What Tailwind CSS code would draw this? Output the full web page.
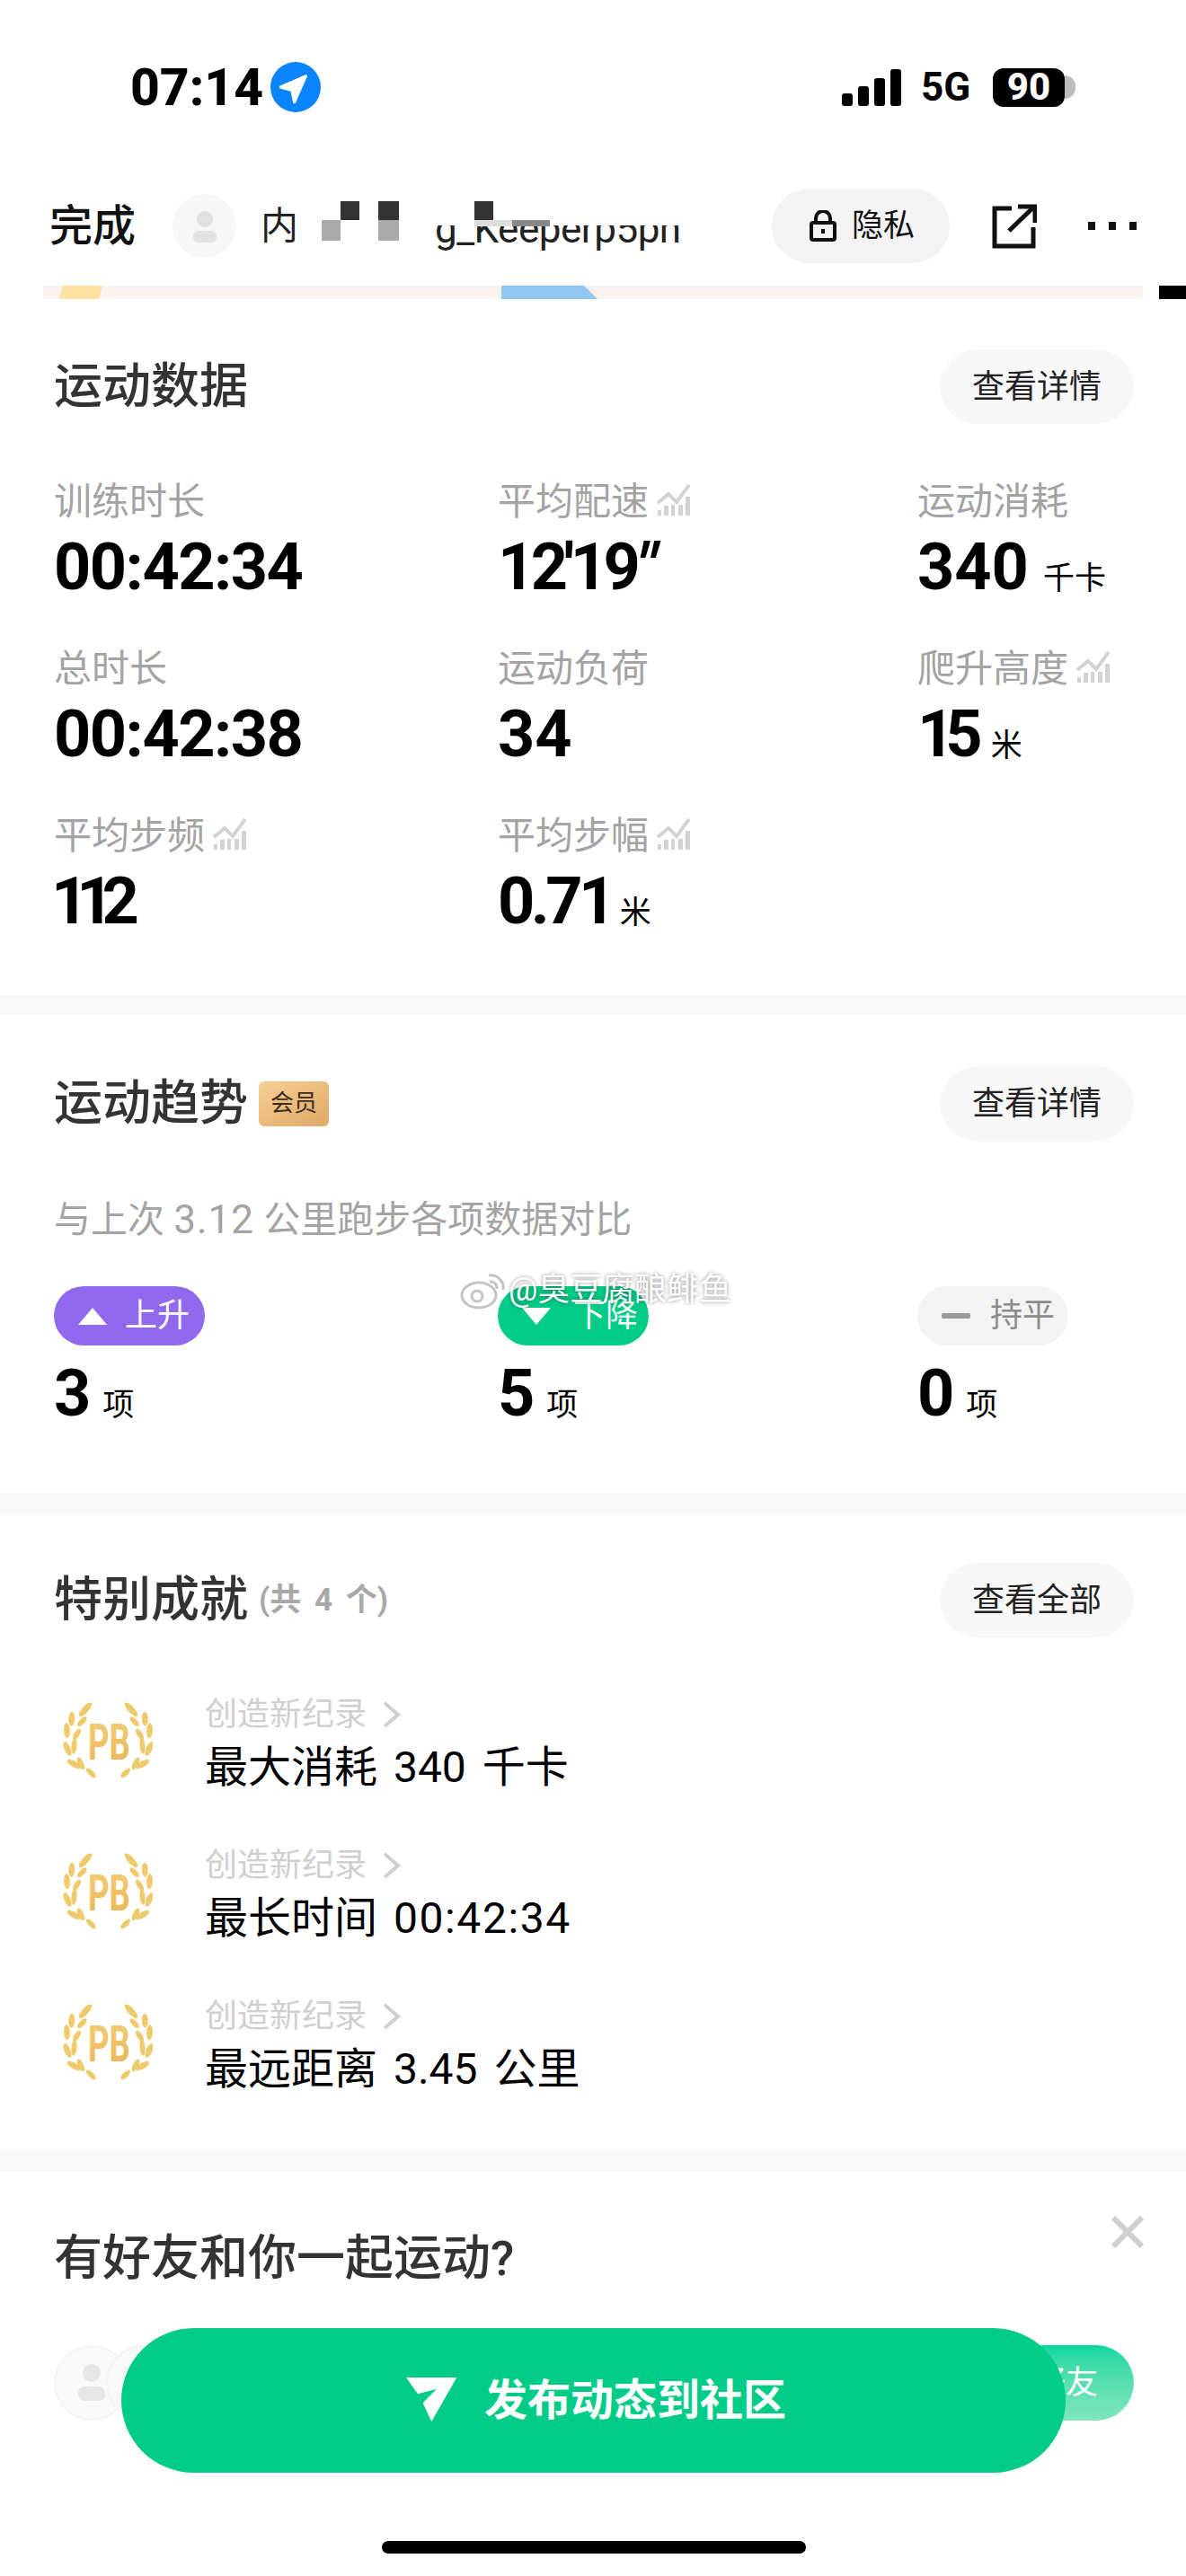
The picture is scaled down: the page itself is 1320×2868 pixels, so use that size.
<!DOCTYPE html>
<html lang="zh-CN">
<head>
  <meta charset="UTF-8">
  <meta name="viewport" content="width=device-width, initial-scale=1.0">
  <title>运动数据</title>
  <script src="https://cdn.jsdelivr.net/npm/@tailwindcss/browser@4"></script>
</head>
<body class="bg-white font-['Roboto','Noto_Sans_CJK_SC',sans-serif]">
  <svg class="absolute w-0 h-0">
    <symbol id="trend" viewBox="0 0 38 36">
      <path d="M1 22 L13 12 L22 21 L36 2" fill="none" stroke="#d2d2d2" stroke-width="4"/>
      <rect x="1" y="30" width="4" height="6" fill="#d2d2d2"/>
      <rect x="8" y="25" width="5" height="11" fill="#d2d2d2"/>
      <rect x="16" y="24" width="4" height="12" fill="#d2d2d2"/>
      <rect x="24" y="24" width="5" height="12" fill="#d2d2d2"/>
      <rect x="32" y="15" width="5" height="21" fill="#d2d2d2"/>
    </symbol>
    <linearGradient id="gold" x1="0" y1="0" x2="0" y2="1">
      <stop offset="0" stop-color="#f3cf78"/>
      <stop offset="1" stop-color="#e8b450"/>
    </linearGradient>
    <g id="leaves" fill="#efca6c">
      <ellipse cx="25" cy="9.3" rx="3.6" ry="10" transform="rotate(42 25 9.3)"/>
      <ellipse cx="9.7" cy="19.8" rx="3.4" ry="8" transform="rotate(3 9.7 19.8)"/>
      <ellipse cx="21.3" cy="22.7" rx="3" ry="7" transform="rotate(43 21.3 22.7)"/>
      <ellipse cx="4.5" cy="32.7" rx="3.4" ry="8.5" transform="rotate(-3 4.5 32.7)"/>
      <ellipse cx="15.5" cy="36.8" rx="3" ry="7" transform="rotate(33 15.5 36.8)"/>
      <ellipse cx="5" cy="53" rx="3.4" ry="8.5" transform="rotate(-23 5 53)"/>
      <ellipse cx="12.5" cy="49.8" rx="3" ry="9" transform="rotate(5 12.5 49.8)"/>
      <ellipse cx="12.5" cy="70" rx="3.4" ry="8.6" transform="rotate(-61 12.5 70)"/>
      <ellipse cx="20" cy="69.3" rx="3" ry="7.5" transform="rotate(-26 20 69.3)"/>
      <ellipse cx="31.3" cy="80" rx="3" ry="7" transform="rotate(-44 31.3 80)"/>
    </g>
    <symbol id="pb" viewBox="0 0 100 92">
      <use href="#leaves"/>
      <use href="#leaves" transform="matrix(-1 0 0 1 101 0)"/>
      <text x="51.5" y="65" text-anchor="middle" font-family="Roboto" font-weight="700" font-size="55" textLength="47" lengthAdjust="spacingAndGlyphs" fill="url(#gold)">PB</text>
    </symbol>
  </svg>

  <div class="relative w-[1320px] h-[2868px] overflow-hidden bg-white">
    <!-- status bar -->
    <div class="h-[44px] mt-[75px] pl-[145px] pr-[123px] flex justify-between items-center">
      <div class="flex items-center">
        <span class="w-[148px] text-[57px] leading-none font-extrabold text-black">07:14</span>
        <span class="ml-[8px] w-[56px] h-[56px] rounded-full bg-[#0a84ff]">
          <svg width="56" height="56" viewBox="0 0 56 56"><path d="M39.5 15.7 L11.2 28 L23.8 31.6 L26.6 44.8 Z" fill="#fff" stroke="#fff" stroke-width="3" stroke-linejoin="round"/></svg>
        </span>
      </div>
      <div class="flex items-center">
        <div class="flex items-end gap-[6px] h-[41px]">
          <span class="w-[12px] h-[14px] rounded-[3px] bg-black"></span>
          <span class="w-[12px] h-[22px] rounded-[3px] bg-black"></span>
          <span class="w-[12px] h-[31px] rounded-[3px] bg-black"></span>
          <span class="w-[12px] h-[41px] rounded-[3px] bg-black"></span>
        </div>
        <span class="ml-[22px] w-[60px] text-[44px] leading-none font-bold text-black">5G</span>
        <span class="ml-[20px] w-[80px] h-[43px] rounded-[12px] bg-black text-white text-[42px] leading-none font-extrabold flex items-center justify-center">90</span>
        <span class="w-[12px] h-[26px] rounded-r-full bg-[#bdbdbd]"></span>
      </div>
    </div>

    <!-- nav -->
    <div class="mt-[91px] h-[83px] pl-[55px] flex items-center">
      <span class="w-[96px] text-[48px] leading-none font-medium text-[#111] whitespace-nowrap">完成</span>
      <span class="ml-[41px] w-[71px] h-[71px] rounded-full bg-[#f7f7f7] flex items-center justify-center">
        <svg width="30" height="36" viewBox="0 0 30 36"><circle cx="15" cy="10" r="9" fill="#e2e2e2"/><rect x="2" y="23" width="26" height="13" rx="6" fill="#e2e2e2"/></svg>
      </span>
      <div class="relative ml-[27px] w-[532px] h-[60px] flex items-center text-[42px] leading-none text-[#222]">
        <span>内</span>
        <span class="absolute left-[194px] top-[11px] text-[44px] tracking-[-0.5px] whitespace-nowrap">g_Keeperp5pn</span>
        <span class="absolute left-[40px] top-0 w-[460px] h-[29px] bg-white"></span>
        <span class="absolute left-[68px] top-[23px] w-[21px] h-[23px] bg-[#aaaaaa]"></span>
        <span class="absolute left-[89px] top-[2px] w-[21px] h-[21px] bg-[#333333]"></span>
        <span class="absolute left-[131px] top-[2px] w-[23px] h-[21px] bg-[#333333]"></span>
        <span class="absolute left-[131px] top-[23px] w-[23px] h-[23px] bg-[#aaaaaa]"></span>
        <span class="absolute left-[238px] top-[2px] w-[21px] h-[21px] bg-[#333333]"></span>
        <span class="absolute left-[238px] top-[23px] w-[42px] h-[7px] bg-[#dddddd]"></span>
        <span class="absolute left-[280px] top-[23px] w-[42px] h-[7px] bg-[#888888]"></span>
      </div>
      <div class="ml-[37px] w-[198px] h-[83px] rounded-full bg-[#f3f3f3] flex items-center pl-[42px]">
        <svg width="30" height="35" viewBox="0 0 30 35" fill="none" stroke="#111" stroke-width="4"><rect x="2" y="14" width="26" height="19" rx="2"/><path d="M7 14 V9 a8 8 0 0 1 16 0 V14"/><rect x="13" y="21" width="4" height="5" fill="#111" stroke="none"/></svg>
        <span class="ml-[17px] text-[35px] leading-none text-[#111]">隐私</span>
      </div>
      <svg class="ml-[47px]" width="50" height="50" viewBox="0 0 50 50" fill="none" stroke="#111" stroke-width="5"><path d="M22 5 H3 V47 H46 V26"/><path d="M19 30 L46 4"/><path d="M29 3 H48 V21"/></svg>
      <div class="ml-[57px] flex gap-[15px]">
        <span class="w-[8px] h-[9px] bg-[#111]"></span>
        <span class="w-[8px] h-[9px] bg-[#111]"></span>
        <span class="w-[8px] h-[9px] bg-[#111]"></span>
      </div>
    </div>

    <!-- map edge -->
    <div class="relative mt-[25px] h-[15px]">
      <div class="absolute left-[48px] top-0 w-[1224px] h-[15px] bg-[#f8f3ef]"></div>
      <div class="absolute left-[68px] top-0 w-[44px] h-[15px] bg-[#fde3a0] -skew-x-12"></div>
      <div class="absolute left-[558px] top-0 w-[107px] h-[15px] bg-[#93c7f3] [clip-path:polygon(0_0,86%_0,100%_100%,0_100%)]"></div>
      <div class="absolute left-[1290px] top-0 w-[30px] h-[15px] bg-black"></div>
    </div>

    <!-- 运动数据 -->
    <section class="pt-[56px] pb-[68px] pl-[60px] pr-[58px]">
      <div class="h-[83px] flex justify-between items-center">
        <h2 class="text-[54px] leading-none font-medium text-[#333]">运动数据</h2>
        <span class="w-[216px] h-[83px] rounded-full bg-[#f7f7f7] flex items-center justify-center text-[36px] text-[#222]">查看详情</span>
      </div>
      <div class="mt-[65px] grid grid-cols-[494px_467px_1fr] gap-y-[55px]">
        <div>
          <div class="h-[44px] flex items-center text-[42px] leading-none text-[#a3a3a3]">训练时长</div>
          <div class="mt-[15px] h-[72px] flex items-baseline text-[72px] leading-[72px] font-bold text-black tracking-[-1.5px]">00:42:34</div>
        </div>
        <div>
          <div class="h-[44px] flex items-center text-[42px] leading-none text-[#a3a3a3]">平均配速<svg class="ml-[9px] -mt-[6px]" width="38" height="36"><use href="#trend"/></svg></div>
          <div class="mt-[15px] h-[72px] flex items-baseline text-[72px] leading-[72px] font-bold text-black tracking-[-4.5px]">12'19<span class="inline-block -skew-x-12">"</span></div>
        </div>
        <div>
          <div class="h-[44px] flex items-center text-[42px] leading-none text-[#a3a3a3]">运动消耗</div>
          <div class="mt-[15px] h-[72px] flex items-baseline text-[72px] leading-[72px] font-bold text-black">340<span class="ml-[16px] text-[35px] font-normal">千卡</span></div>
        </div>
        <div>
          <div class="h-[44px] flex items-center text-[42px] leading-none text-[#a3a3a3]">总时长</div>
          <div class="mt-[15px] h-[72px] flex items-baseline text-[72px] leading-[72px] font-bold text-black tracking-[-1.5px]">00:42:38</div>
        </div>
        <div>
          <div class="h-[44px] flex items-center text-[42px] leading-none text-[#a3a3a3]">运动负荷</div>
          <div class="mt-[15px] h-[72px] flex items-baseline text-[72px] leading-[72px] font-bold text-black">34</div>
        </div>
        <div>
          <div class="h-[44px] flex items-center text-[42px] leading-none text-[#a3a3a3]">爬升高度<svg class="ml-[9px] -mt-[6px]" width="38" height="36"><use href="#trend"/></svg></div>
          <div class="mt-[15px] h-[72px] flex items-baseline text-[72px] leading-[72px] font-bold text-black tracking-[-10px]">15<span class="ml-[19px] text-[35px] font-normal tracking-normal">米</span></div>
        </div>
        <div>
          <div class="h-[44px] flex items-center text-[42px] leading-none text-[#a3a3a3]">平均步频<svg class="ml-[9px] -mt-[6px]" width="38" height="36"><use href="#trend"/></svg></div>
          <div class="mt-[15px] -ml-[3px] h-[72px] flex items-baseline text-[72px] leading-[72px] font-bold text-black tracking-[-13px]">112</div>
        </div>
        <div>
          <div class="h-[44px] flex items-center text-[42px] leading-none text-[#a3a3a3]">平均步幅<svg class="ml-[9px] -mt-[6px]" width="38" height="36"><use href="#trend"/></svg></div>
          <div class="mt-[15px] h-[72px] flex items-baseline text-[72px] leading-[72px] font-bold text-black tracking-[-4.5px]">0.71<span class="ml-[9px] text-[35px] font-normal tracking-normal">米</span></div>
        </div>
      </div>
    </section>

    <div class="h-[22px] bg-[#f8f8f8]"></div>

    <!-- 运动趋势 -->
    <section class="pt-[57px] pb-[74px] pl-[60px] pr-[58px]">
      <div class="h-[83px] flex items-center">
        <h2 class="text-[54px] leading-none font-medium text-[#333]">运动趋势</h2>
        <span class="ml-[12px] w-[78px] h-[50px] rounded-[6px] bg-gradient-to-br from-[#f6cf93] to-[#dfa866] flex items-center justify-center text-[26px] text-[#3b2e1e]">会员</span>
        <span class="ml-auto w-[216px] h-[83px] rounded-full bg-[#f7f7f7] flex items-center justify-center text-[36px] text-[#222]">查看详情</span>
      </div>
      <p class="mt-[66px] h-[44px] flex items-center text-[41px] leading-none text-[#a3a3a3] whitespace-pre">与上次 <span class="text-[44px] tracking-[1px]">3.12</span> 公里跑步各项数据对比</p>
      <div class="mt-[52px] grid grid-cols-[494px_467px_1fr]">
        <div>
          <span class="w-[168px] h-[66px] rounded-full bg-[#9168ee] flex items-center pl-[27px] text-[36px] leading-none text-white">
            <svg width="32" height="19" viewBox="0 0 32 19"><path d="M16 0 L32 19 H0 Z" fill="#fff"/></svg>
            <span class="ml-[20px]">上升</span>
          </span>
        </div>
        <div>
          <span class="w-[168px] h-[66px] rounded-full bg-[#00cc88] flex items-center pl-[27px] text-[36px] leading-none text-white">
            <svg width="32" height="19" viewBox="0 0 32 19"><path d="M16 19 L32 0 H0 Z" fill="#fff"/></svg>
            <span class="ml-[25px]">下降</span>
          </span>
        </div>
        <div>
          <span class="w-[168px] h-[66px] rounded-full bg-[#f3f3f3] flex items-center pl-[27px] text-[36px] leading-none text-[#8c8c8c]">
            <span class="w-[32px] h-[6px] rounded-[2px] bg-[#9a9a9a]"></span>
            <span class="ml-[22px]">持平</span>
          </span>
        </div>
      </div>
      <div class="mt-[18px] grid grid-cols-[494px_467px_1fr]">
        <div class="h-[72px] flex items-baseline text-[72px] leading-[72px] font-bold text-black">3<span class="ml-[13px] text-[35px] font-normal">项</span></div>
        <div class="h-[72px] flex items-baseline text-[72px] leading-[72px] font-bold text-black">5<span class="ml-[13px] text-[35px] font-normal">项</span></div>
        <div class="h-[72px] flex items-baseline text-[72px] leading-[72px] font-bold text-black">0<span class="ml-[13px] text-[35px] font-normal">项</span></div>
      </div>
    </section>

    <div class="h-[24px] bg-[#f8f8f8]"></div>

    <!-- 特别成就 -->
    <section class="pt-[54px] pb-[66px] pl-[62px] pr-[58px]">
      <div class="h-[83px] flex items-center">
        <h2 class="-ml-[2px] text-[54px] leading-none font-medium text-[#333]">特别成就</h2>
        <span class="ml-[12px] text-[35px] leading-none font-bold text-[#a8a8a8] [word-spacing:6px]">(共 4 个)</span>
        <span class="ml-auto w-[216px] h-[83px] rounded-full bg-[#f7f7f7] flex items-center justify-center text-[36px] text-[#222]">查看全部</span>
      </div>
      <div class="mt-[64px] flex flex-col gap-[62px]">
        <div class="flex items-center">
          <svg class="ml-[8px]" width="100" height="92"><use href="#pb"/></svg>
          <div class="ml-[58px]">
            <div class="h-[44px] flex items-center text-[36px] leading-none text-[#cfcfcf]">创造新纪录<svg class="ml-[17px]" width="22" height="30" viewBox="0 0 22 30" fill="none" stroke="#cfcfcf" stroke-width="4"><path d="M3 2 L18 15 L3 28"/></svg></div>
            <div class="mt-[12px] h-[50px] flex items-center text-[48px] leading-none text-black whitespace-pre [word-spacing:6px]">最大消耗 340 千卡</div>
          </div>
        </div>
        <div class="flex items-center">
          <svg class="ml-[8px]" width="100" height="92"><use href="#pb"/></svg>
          <div class="ml-[58px]">
            <div class="h-[44px] flex items-center text-[36px] leading-none text-[#cfcfcf]">创造新纪录<svg class="ml-[17px]" width="22" height="30" viewBox="0 0 22 30" fill="none" stroke="#cfcfcf" stroke-width="4"><path d="M3 2 L18 15 L3 28"/></svg></div>
            <div class="mt-[12px] h-[50px] flex items-center text-[48px] leading-none text-black whitespace-pre [word-spacing:6px]">最长时间 <span class="tracking-[1.6px]">00:42:34</span></div>
          </div>
        </div>
        <div class="flex items-center">
          <svg class="ml-[8px]" width="100" height="92"><use href="#pb"/></svg>
          <div class="ml-[58px]">
            <div class="h-[44px] flex items-center text-[36px] leading-none text-[#cfcfcf]">创造新纪录<svg class="ml-[17px]" width="22" height="30" viewBox="0 0 22 30" fill="none" stroke="#cfcfcf" stroke-width="4"><path d="M3 2 L18 15 L3 28"/></svg></div>
            <div class="mt-[12px] h-[50px] flex items-center text-[48px] leading-none text-black whitespace-pre [word-spacing:6px]">最远距离 3.45 公里</div>
          </div>
        </div>
      </div>
    </section>

    <div class="h-[23px] bg-[#f8f8f8]"></div>

    <!-- 好友 -->
    <section class="relative pt-[67px] pl-[60px] pr-[58px]">
      <h2 class="h-[60px] flex items-center text-[54px] leading-none font-medium text-[#333] whitespace-nowrap">有好友和你一起运动?</h2>
      <div class="mt-[66px] flex items-center">
        <span class="w-[84px] h-[84px] rounded-full bg-[#f9f9f9] border-2 border-[#f3f3f3] flex items-center justify-center">
          <svg width="32" height="42" viewBox="0 0 32 42"><circle cx="16" cy="10" r="10" fill="#e6e6e6"/><rect x="1" y="25" width="30" height="16" rx="7" fill="#e6e6e6"/></svg>
        </span>
        <span class="-ml-[26px] w-[84px] h-[84px] rounded-full bg-[#f9f9f9] border-2 border-[#f3f3f3]"></span>
        <span class="ml-auto w-[240px] h-[84px] rounded-r-[42px] bg-gradient-to-b from-[#00d7a0] to-[#7ee6bf] flex items-center justify-end pr-[40px] text-[36px] leading-none text-white">好友</span>
      </div>
      <svg class="absolute right-[47px] top-[49px]" width="36" height="36" viewBox="0 0 36 36" fill="none" stroke="#cfcfcf" stroke-width="6"><path d="M2 2 L34 34 M34 2 L2 34"/></svg>
    </section>

    <!-- floating publish button -->
    <div class="absolute left-[135px] top-[2592px] w-[1051px] h-[161px] pl-[6px] rounded-full bg-[#00cc88] flex items-center justify-center">
      <svg class="-mt-[2px]" width="57" height="49" viewBox="0 0 57 49"><path d="M0 0 H56.3 L28.3 49 L18.6 28.3 L34 12.7 L13 18.3 Z" fill="#fff"/></svg>
      <span class="ml-[30px] text-[48px] leading-none font-bold text-white">发布动态到社区</span>
    </div>

    <!-- home indicator -->
    <div class="absolute left-[425px] top-[2829px] w-[472px] h-[14px] rounded-full bg-black"></div>

    <!-- watermark -->
    <div class="absolute left-[511px] top-[1414px] flex items-center text-[36px] leading-none text-white [text-shadow:0_0_4px_rgba(0,0,0,0.45)]">
      <svg width="52" height="44" viewBox="0 0 52 44" fill="none" stroke="#c4c4c4" stroke-width="3"><ellipse cx="22" cy="28" rx="19" ry="14" fill="#fff"/><circle cx="20" cy="29" r="6"/><path d="M33 6 a14 14 0 0 1 16 16"/><path d="M34 13 a7 7 0 0 1 8 8"/></svg>
      <span class="ml-[3px]">@臭豆腐酿鲱鱼</span>
    </div>
  </div>
</body>
</html>
